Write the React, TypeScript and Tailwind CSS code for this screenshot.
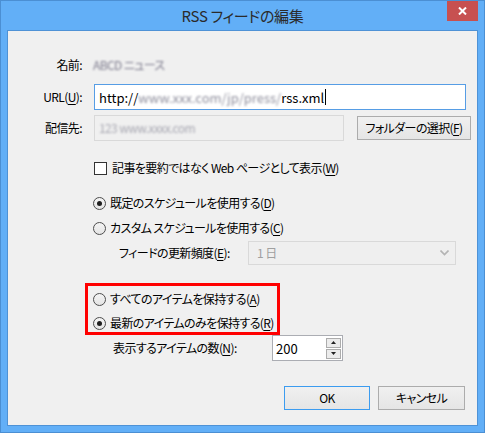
import React from "react";

const font = "font-['Noto_Sans_CJK_JP','Noto_Sans',sans-serif] [font-feature-settings:'palt']";

function Radio({ checked }: { checked?: boolean }) {
  return (
    <span className="flex h-[13px] w-[13px] shrink-0 items-center justify-center rounded-full border border-[#4d4d4d] bg-gradient-to-b from-[#f4f4f4] to-[#e4e4e4]">
      {checked && <span className="h-[5px] w-[5px] rounded-full bg-[#1e1e1e]" />}
    </span>
  );
}

function RadioRow({ checked, children }: { checked?: boolean; children: React.ReactNode }) {
  return (
    <div className="flex h-[16px] items-center gap-[4px]">
      <Radio checked={checked} />
      <span>{children}</span>
    </div>
  );
}

function Key({ k }: { k: string }) {
  return (
    <>
      (<u className="underline-offset-2">{k}</u>)
    </>
  );
}

export default function App() {
  return (
    <div className={`flex h-[433px] w-[485px] flex-col whitespace-nowrap border border-[#4b8fd3] bg-[#62aff7] text-[12px] leading-none tracking-[-0.6px] text-black ${font}`}>
      <div className="relative flex h-[29px] shrink-0 items-center justify-center">
        <span className="text-[15px] tracking-[-0.3px] text-[#2b2b2b]">RSS フィードの編集</span>
        <div className="absolute right-[6px] top-0 flex h-[20px] w-[31px] items-center justify-center bg-[#c75050]">
          <svg width="9" height="8" viewBox="0 0 9 8">
            <path d="M1 0.5 L8 7.5 M8 0.5 L1 7.5" stroke="#fff" strokeWidth="2" />
          </svg>
        </div>
      </div>

      <div className="mx-[6px] mb-[6px] flex flex-1 flex-col border border-[#4e92d6] bg-[#f0f0f0]">
        {/* 名前 */}
        <div className="mt-[24px] flex h-[20px] items-center">
          <span className="w-[74px] text-right">名前:</span>
          <span className="ml-[11px] text-[#7c7a8c] blur-[1.2px]">ABCD ニュース</span>
        </div>

        {/* URL */}
        <div className="mt-[9px] flex h-[26px] items-center">
          <span className="w-[74px] text-right">
            URL<Key k="U" />:
          </span>
          <div className="ml-[12px] flex h-[26px] w-[372px] items-center border border-[#569de5] bg-white pl-[4px] text-[13px] tracking-normal">
            <span>http://</span>
            <span className="text-[#8e8e9c] blur-[1.2px]">www.xxx.com/jp/press/</span>
            <span>rss.xml</span>
            <span className="ml-[1px] h-[16px] w-px bg-black" />
          </div>
        </div>

        {/* 配信先 */}
        <div className="mt-[5px] flex h-[26px] items-center">
          <span className="w-[74px] text-right">配信先:</span>
          <div className="ml-[12px] flex h-[26px] w-[250px] items-center border border-[#d9d9d9] bg-[#f0f0f0] pl-[4px]">
            <span className="text-[#a8a8b2] blur-[1.2px]">123 www.xxxx.com</span>
          </div>
          <button className="ml-[13px] flex h-[24px] w-[114px] items-center justify-center border border-[#acacac] bg-gradient-to-b from-[#f0f0f0] to-[#e5e5e5]">
            フォルダーの選択<Key k="F" />
          </button>
        </div>

        {/* checkbox */}
        <div className="mt-[17px] flex h-[20px] items-center gap-[5px] pl-[86px]">
          <span className="h-[13px] w-[13px] border border-[#333] bg-white" />
          <span>
            記事を要約ではなく Web ページとして表示<Key k="W" />
          </span>
        </div>

        {/* schedule */}
        <div className="mt-[15px] flex h-[20px] items-center gap-[4px] pl-[85px]">
          <Radio checked />
          <span>
            既定のスケジュールを使用する<Key k="D" />
          </span>
        </div>
        <div className="mt-[5px] flex h-[20px] items-center gap-[4px] pl-[85px]">
          <Radio />
          <span>
            カスタム スケジュールを使用する<Key k="C" />
          </span>
        </div>
        <div className="mt-[3px] flex h-[24px] items-center pl-[111px]">
          <span className="w-[129px]">
            フィードの更新頻度<Key k="E" />:
          </span>
          <div className="flex h-[24px] w-[208px] items-center justify-between border border-[#d9d9d9] bg-[#efefef] pl-[8px] pr-[6px] text-[#a0a0a0]">
            <span>1 日</span>
            <svg width="9" height="6" viewBox="0 0 9 6">
              <path d="M0.5 0.5 L4.5 4.5 L8.5 0.5" fill="none" stroke="#b4b4b4" strokeWidth="1.6" />
            </svg>
          </div>
        </div>

        {/* retention, highlighted */}
        <div className="ml-[77px] mt-[18px] flex h-[52px] w-[195px] flex-col gap-[8px] border-[3px] border-[#f00] pl-[5px] pt-[5px]">
          <RadioRow>
            すべてのアイテムを保持する<Key k="A" />
          </RadioRow>
          <RadioRow checked>
            最新のアイテムのみを保持する<Key k="R" />
          </RadioRow>
        </div>

        <div className="flex h-[26px] items-center pl-[105px]">
          <span className="w-[159px]">
            表示するアイテムの数<Key k="N" />:
          </span>
          <div className="flex h-[26px] w-[71px] items-center justify-between border border-[#abadb3] bg-white pl-[3px] pr-[1px] text-[13px] tracking-normal">
            <span>200</span>
            <div className="flex flex-col gap-px">
              <span className="flex h-[10px] w-[15px] items-center justify-center border border-[#acacac] bg-[#ececec]">
                <svg width="5" height="3" viewBox="0 0 5 3"><path d="M0 3 L2.5 0 L5 3Z" fill="#222" /></svg>
              </span>
              <span className="flex h-[10px] w-[15px] items-center justify-center border border-[#acacac] bg-[#ececec]">
                <svg width="5" height="3" viewBox="0 0 5 3"><path d="M0 0 L2.5 3 L5 0Z" fill="#222" /></svg>
              </span>
            </div>
          </div>
        </div>

        <div className="mt-[25px] flex h-[24px] items-center gap-[8px] pl-[276px]">
          <button className="flex h-[24px] w-[86px] items-center justify-center border border-[#3c9cf0] bg-gradient-to-b from-[#f0f0f0] to-[#e5e5e5]">
            OK
          </button>
          <button className="flex h-[24px] w-[87px] items-center justify-center border border-[#acacac] bg-gradient-to-b from-[#f0f0f0] to-[#e5e5e5]">
            キャンセル
          </button>
        </div>
      </div>
    </div>
  );
}
